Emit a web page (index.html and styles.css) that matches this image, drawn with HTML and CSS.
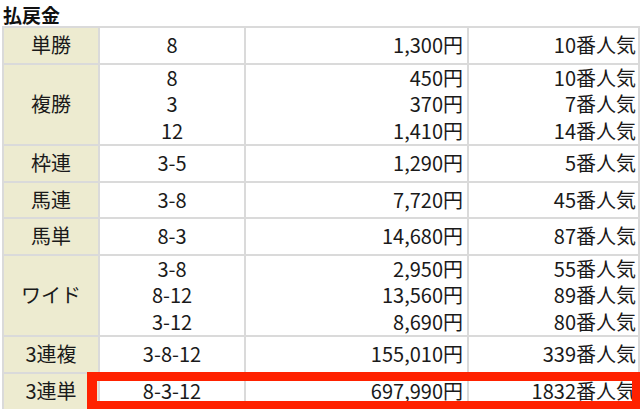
FILE: index.html
```html
<!DOCTYPE html>
<html lang="ja">
<head>
<meta charset="utf-8">
<link rel="stylesheet" href="styles.css">
</head>
<body>
<div class="page">
  <h2 class="title">払戻金</h2>
  <table class="payout">
    <colgroup>
      <col class="c-label"><col class="c-num"><col class="c-pay"><col class="c-pop">
    </colgroup>
    <tr class="one"><th>単勝</th><td class="num">8</td><td class="pay">1,300円</td><td class="pop">10番人気</td></tr>
    <tr class="three"><th>複勝</th><td class="num">8<br>3<br>12</td><td class="pay">450円<br>370円<br>1,410円</td><td class="pop">10番人気<br>7番人気<br>14番人気</td></tr>
    <tr class="one"><th>枠連</th><td class="num">3-5</td><td class="pay">1,290円</td><td class="pop">5番人気</td></tr>
    <tr class="one"><th>馬連</th><td class="num">3-8</td><td class="pay">7,720円</td><td class="pop">45番人気</td></tr>
    <tr class="one"><th>馬単</th><td class="num">8-3</td><td class="pay">14,680円</td><td class="pop">87番人気</td></tr>
    <tr class="three"><th>ワイド</th><td class="num">3-8<br>8-12<br>3-12</td><td class="pay">2,950円<br>13,560円<br>8,690円</td><td class="pop">55番人気<br>89番人気<br>80番人気</td></tr>
    <tr class="one"><th>3連複</th><td class="num">3-8-12</td><td class="pay">155,010円</td><td class="pop">339番人気</td></tr>
    <tr class="one"><th>3連単</th><td class="num">8-3-12</td><td class="pay">697,990円</td><td class="pop">1832番人気</td></tr>
  </table>
  <div class="highlight"></div>
</div>
</body>
</html>
```
FILE: styles.css
```css
html, body {
  margin: 0;
  padding: 0;
  background: #ffffff;
}
body {
  font-family: "Noto Sans CJK JP", "Noto Sans", sans-serif;
  color: #1a1a1a;
  overflow: hidden;
}
.page {
  position: relative;
  width: 640px;
  height: 409px;
  overflow: hidden;
  padding-left: 2px;
  box-sizing: border-box;
}
.title {
  margin: 0;
  box-sizing: border-box;
  height: 26px;
  padding-top: 5px;
  font-size: 19px;
  line-height: 20px;
  font-weight: bold;
  color: #111;
  padding-left: 1px;
}
.payout {
  border-collapse: collapse;
  width: 636px;
  table-layout: fixed;
  font-size: 20px;
  line-height: 26.5px;
}
.c-label { width: 96px; }
.c-num { width: 146px; }
.c-pay { width: 223px; }
.c-pop { width: 171px; }
.payout th,
.payout td {
  border: 2px solid #dadada;
  padding: 0 4px;
  vertical-align: middle;
  font-weight: normal;
}
.payout th {
  background: #edebd0;
  text-align: center;
}
.payout .num { text-align: center; }
.payout .pay { text-align: right; padding-right: 4px; }
.payout .pop { text-align: right; padding-right: 2px; }
.one th, .one td { height: 34.6px; }
.three th, .three td { height: 79.5px; }
.highlight {
  position: absolute;
  left: 87px;
  top: 372px;
  width: 535px;
  height: 20px;
  border-style: solid;
  border-color: #ff2200;
  border-width: 9px 8px 8px 10px;
}
```
